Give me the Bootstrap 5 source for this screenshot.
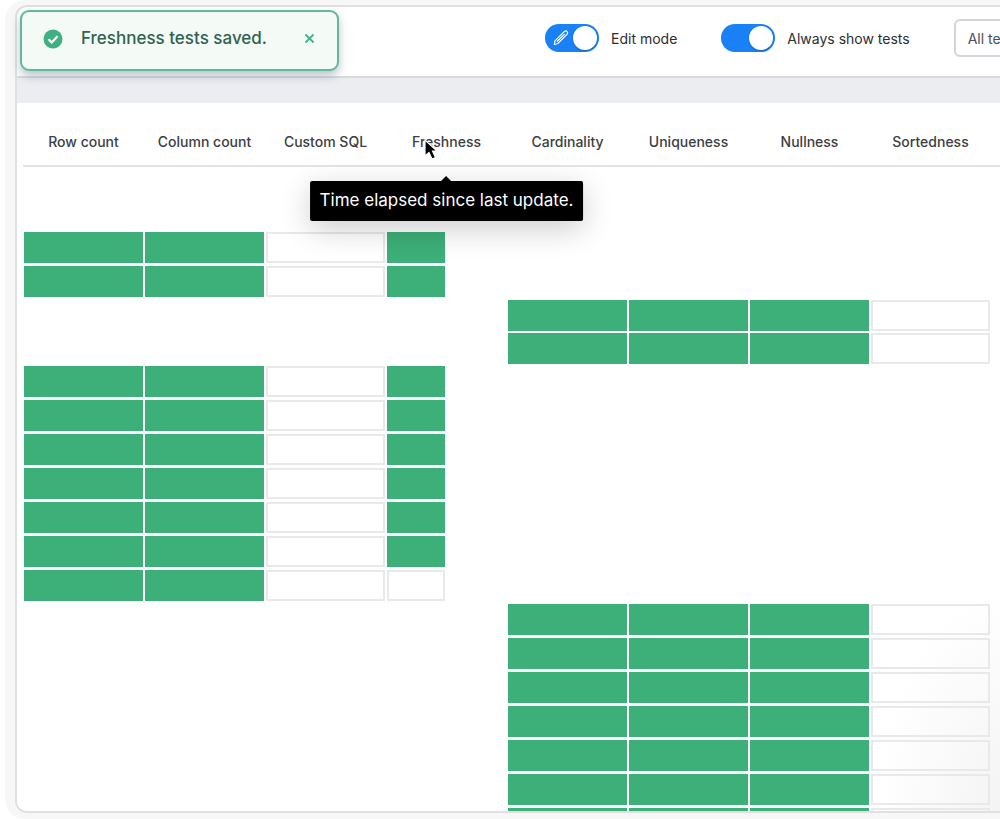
<!DOCTYPE html>
<html lang="en">
<head>
<meta charset="utf-8">
<meta name="viewport" content="width=device-width, initial-scale=1">
<title>Table tests</title>
<link href="https://cdn.jsdelivr.net/npm/bootstrap@5.3.0/dist/css/bootstrap.min.css" rel="stylesheet">
<style>
  body { font-family: Inter, "Liberation Sans", sans-serif; font-size: 14px; color: #3c3e43; }
  .frame { margin-left: 5px; padding: 5px 0 6px 10px; background: #f7f7f7; border-radius: 20px 0 0 20px; }
  .panel { border: 2px solid #e0e0e0; border-right: 0; border-radius: 12px 0 0 12px; background: #fff; min-height: 0; }
  .toolbar { height: 71px; padding-left: 528px; padding-bottom: 7px; border-bottom: 2px solid #d9dadd; }
  .toolbar label { color: #2c2e33; }
  .toolbar-group { margin-right: 44px; }
  .band { height: 25px; background: #ebedf1; }
  .switch-input.form-check-input { width: 54px; height: 28px; margin: 0; border: 0; border-radius: 14px; background: #1a80f6; }
  .switch-input::after { content: ""; display: block; width: 24px; height: 24px; margin: 2px 2px 2px auto; border-radius: 50%; background: #fff; box-shadow: 0 1px 2px #0003; }
  .pencil { left: 7px; top: 5px; pointer-events: none; }
  .filter-select.form-select { width: 160px; height: 38px; padding-left: 12px; font-size: 14px; color: #4b4d60; border: 2px solid #d3d3dc; border-radius: 6px; }
  .toast-note { left: 20px; top: 10px; width: 319px; height: 61px; padding: 0 21px 4px; border: 2px solid #5dba9a; border-radius: 9px; background: #f4faf6; color: #2f6350; font-size: 17px; font-weight: 500; box-shadow: 0 5px 10px #5b6b8066; z-index: 5; }
  .toast-note span { margin-left: 18px; }
  .toast-note button { color: #45b08a; }
  .tests-area { padding-left: 6px; background: radial-gradient(ellipse 120px 220px at 100% 100%, #f4f4f4, #fff); }
  .tests-grid { table-layout: fixed; border-collapse: separate; border-spacing: 0; }
  .tests-grid th { height: 64px; padding: 15px 0 0; vertical-align: middle; text-align: center; font-weight: 500; border-bottom: 2px solid #e4e4e4; line-height: 20px; white-space: nowrap; }
  .tests-grid .edge { width: 9px; }
  .tests-grid td { height: 34px; padding: 0 1px; vertical-align: top; }
  .tests-grid .column-first td { height: 33px; }
  .tests-grid .group-head td { height: 65px; }
  .result { height: 31px; }
  .result.pass { background: #3daf78; }
  .result.unset { border: 2px solid #e9e9e9; }
  .result.short { width: 58px; }
  .hint { top: 78px; left: 50%; transform: translateX(-50%); padding: 9px 10px 11px; border-radius: 2px; background: #000; color: #fff; font-size: 17px; font-weight: 400; box-shadow: 0 8px 30px #0003; z-index: 3; }
  .hint::before { content: ""; position: absolute; left: 50%; top: -5px; margin-left: -5px; border: 5px solid transparent; border-top: 0; border-bottom-color: #000; }
  .pointer { left: 37px; top: 35px; z-index: 4; }
</style>
</head>
<body class="bg-white overflow-hidden">
<div class="frame vh-100 d-flex flex-column">
  <main class="panel flex-fill d-flex flex-column overflow-hidden">
    <div class="toolbar d-flex align-items-center flex-shrink-0 text-nowrap">
      <div class="toolbar-group d-flex align-items-center flex-shrink-0 position-relative">
        <input class="form-check-input switch-input flex-shrink-0" type="checkbox" role="switch" id="edit" checked>
        <svg class="pencil position-absolute" width="18" height="18" viewBox="0 0 18 18" fill="none" stroke="#fff" stroke-width="1.2" stroke-linejoin="round" aria-hidden="true"><path d="M2.300 15.500 3 11.800 12.200 2.600Q13.800 1.200 15 2.500 16.300 3.700 15 5.300L5.800 14.500ZM5 12.500 12.700 4.800"/></svg>
        <label class="ms-2 ps-1" for="edit">Edit mode</label>
      </div>
      <div class="toolbar-group d-flex align-items-center flex-shrink-0">
        <input class="form-check-input switch-input flex-shrink-0" type="checkbox" role="switch" id="always" checked>
        <label class="ms-2 ps-1" for="always">Always show tests</label>
      </div>
      <select class="form-select filter-select flex-shrink-0" aria-label="Filter tests"><option>All tests</option></select>
    </div>
    <div class="band flex-shrink-0"></div>
    <div class="tests-area flex-fill overflow-hidden">
      <table class="tests-grid w-100">
        <thead>
          <tr>
            <th scope="col">Row count</th><th scope="col">Column count</th><th scope="col">Custom SQL</th>
            <th scope="col" class="position-relative">Freshness
              <svg class="pointer position-absolute" width="16" height="24" viewBox="0 0 16 24" aria-hidden="true"><path d="M2 2v16l4-3.500 3 6.500 3.500-1.500-3-6.500H14Z" fill="#000" stroke="#fff" stroke-width="1.200"/></svg>
              <div class="hint position-absolute" role="tooltip">Time elapsed since last update.</div>
            </th>
            <th scope="col">Cardinality</th><th scope="col">Uniqueness</th><th scope="col">Nullness</th><th scope="col">Sortedness</th>
            <th class="edge"></th>
          </tr>
        </thead>
        <tbody id="rows"><tr class="group-head"><td colspan="9"></td></tr></tbody>
      </table>
    </div>
  </main>
</div>
<div class="toast-note position-absolute d-flex align-items-center" role="status">
  <svg width="20" height="20" viewBox="0 0 20 20" class="flex-shrink-0" aria-hidden="true"><circle cx="10" cy="10" r="9.500" fill="#3fb083"/><path d="m5.500 10.200 3.200 3.200 5.900-6.200" fill="none" stroke="#fff" stroke-width="2.200"/></svg>
  <span class="flex-fill text-nowrap">Freshness tests saved.</span>
  <button class="btn p-0 border-0 d-flex" type="button" aria-label="Dismiss"><svg width="13" height="13" viewBox="0 0 13 13" stroke="currentColor" stroke-width="1.800" aria-hidden="true"><path d="m2.500 2.500 8 8m0-8-8 8"/></svg></button>
</div>
<script src="https://cdn.jsdelivr.net/npm/bootstrap@5.3.0/dist/js/bootstrap.bundle.min.js"></script>
<script>
  // p = passing, u = no test set, s / e = short passing / empty, "-" = not applicable
  const kinds = { p: 'pass', u: 'unset', s: 'pass short', e: 'unset short' };
  const groups = [
    { rows: Array(2).fill('ppus----') },
    { rows: Array(2).fill('----pppu'), name: 'column-first' },
    { rows: [...Array(6).fill('ppus----'), 'ppue----'] },
    { rows: Array(7).fill('----pppu') }
  ];
  document.getElementById('rows').insertAdjacentHTML('beforeend', groups.map(g => g.rows.map(r =>
    `<tr class="${g.name || ''}">` + [...r].map(c => `<td>${kinds[c] ? `<div class="result ${kinds[c]}"></div>` : ''}</td>`).join('') + '<td></td></tr>'
  ).join('')).join(''));
</script>
</body>
</html>
